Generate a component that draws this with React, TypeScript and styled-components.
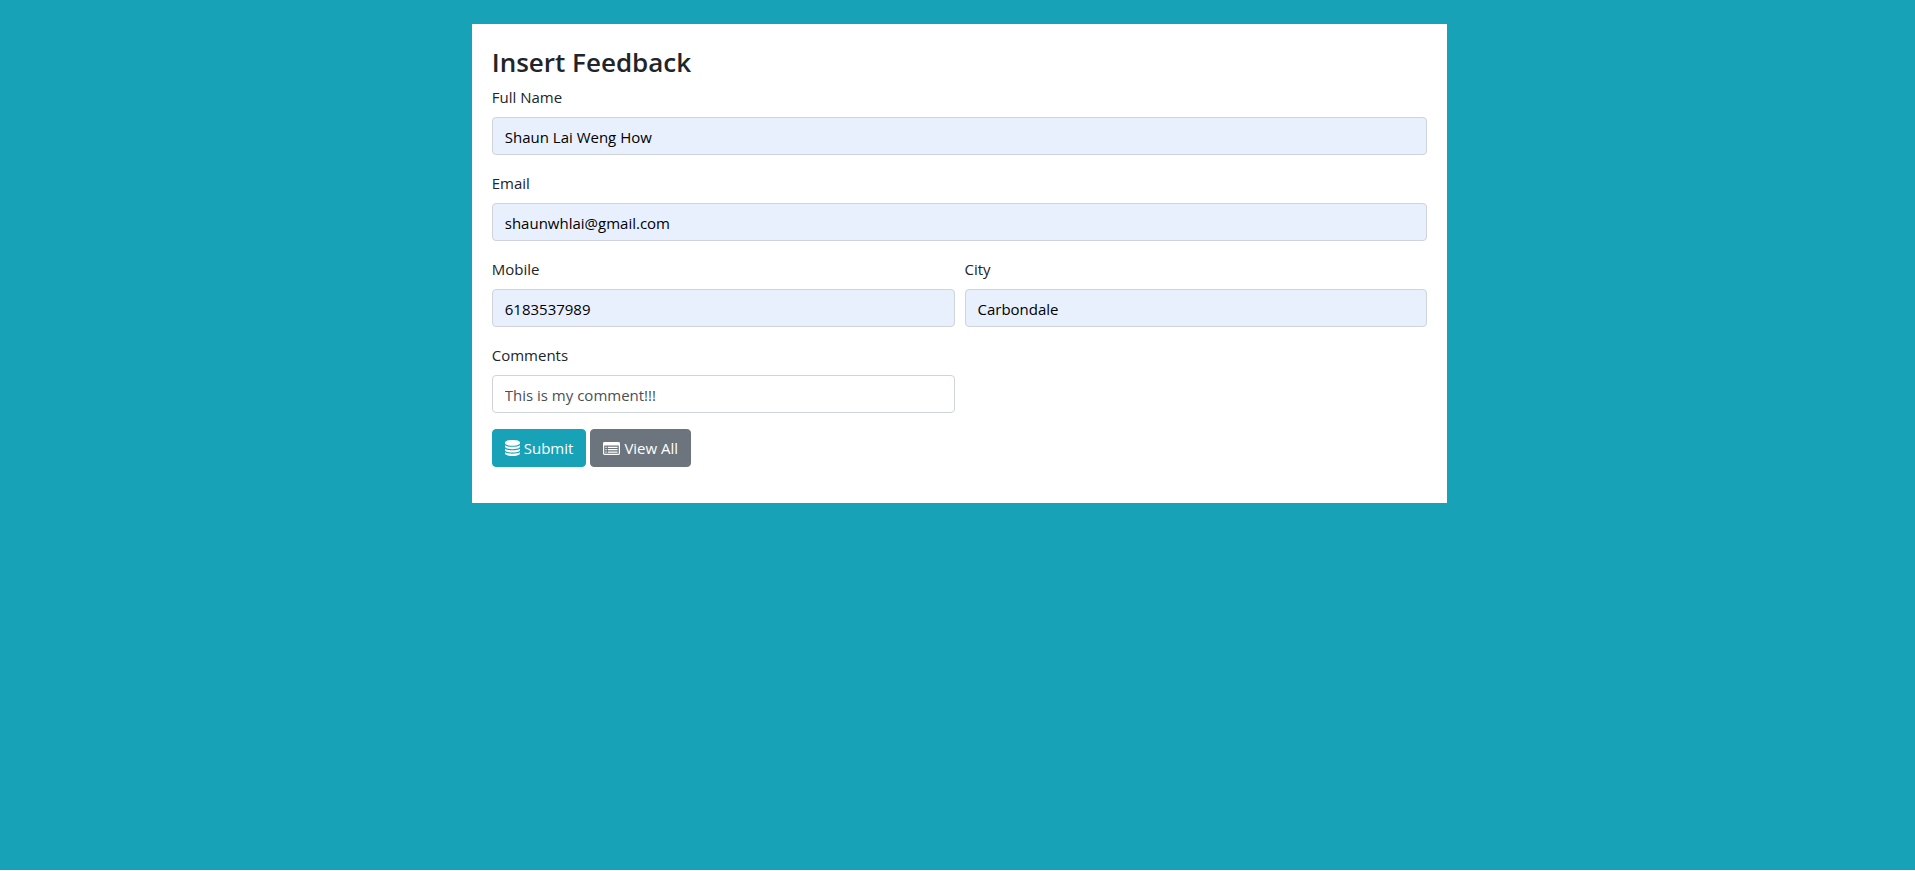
import React from "react";
import styled, { createGlobalStyle } from "styled-components";

const GlobalStyle = createGlobalStyle`
  *, *::before, *::after { box-sizing: border-box; }
  body {
    margin: 0;
    background: #fff;
    color: #212529;
    font-family: "Segoe UI", "Open Sans", "Noto Sans", sans-serif;
    font-size: 15px;
    line-height: 24px;
  }
`;

const Page = styled.main`
  display: flow-root;
  min-height: calc(100vh - 1px);
  background: #17a2b8;
`;

const Card = styled.section`
  width: calc(50% + 18px);
  margin: 24px 0 24px calc(25% - 7px);
  padding: 20px 20px 36px;
  background: #fff;
`;

const Title = styled.h3`
  margin: 0;
  padding: 2px 0 6px;
  font-size: 26px;
  font-weight: 600;
  line-height: 33px;
`;

const FieldGrid = styled.div`
  display: grid;
  grid-template-columns: 1fr 1fr;
  column-gap: 10px;
  row-gap: 16px;
  margin-bottom: 16px;
`;

const Field = styled.div<{ $wide?: boolean }>`
  display: flex;
  flex-direction: column;
  gap: 8px;
  min-width: 0;
  grid-column: ${({ $wide }) => ($wide ? "1 / -1" : "auto")};
`;

const Label = styled.label`
  align-self: flex-start;
`;

const TextInput = styled.input<{ $filled?: boolean }>`
  width: 100%;
  height: 38px;
  padding: 7px 12px 5px;
  border: 1px solid #ced4da;
  border-radius: 4px;
  background: ${({ $filled }) => ($filled ? "#e8f0fe" : "#fff")};
  color: ${({ $filled }) => ($filled ? "#000" : "#495057")};
  font: inherit;

  &:focus {
    outline: 0;
    border-color: #80bdff;
  }
`;

const Actions = styled.div`
  display: flex;
  gap: 4px;
`;

const Button = styled.button<{ $tone: string }>`
  display: inline-flex;
  align-items: center;
  gap: 4px;
  height: 38px;
  padding: 0 12px;
  border: 1px solid ${({ $tone }) => $tone};
  border-radius: 4px;
  background: ${({ $tone }) => $tone};
  color: #fff;
  font: inherit;
  cursor: pointer;
`;

const DatabaseIcon = () => (
  <svg width="15" height="16" viewBox="0 0 1536 1792" preserveAspectRatio="none" fill="currentColor" aria-hidden="true">
    <path d="M768 768q237 0 443-43t325-127v170q0 69-103 128t-280 93.500-385 34.500-385-34.500-280-93.500-103-128v-170q119 84 325 127t443 43zm0 768q237 0 443-43t325-127v170q0 69-103 128t-280 93.500-385 34.500-385-34.500-280-93.500-103-128v-170q119 84 325 127t443 43zm0-384q237 0 443-43t325-127v170q0 69-103 128t-280 93.500-385 34.500-385-34.500-280-93.500-103-128v-170q119 84 325 127t443 43zm0-1152q208 0 385 34.500t280 93.500 103 128v128q0 69-103 128t-280 93.500-385 34.500-385-34.500-280-93.500-103-128v-128q0-69 103-128t280-93.500 385-34.500z" />
  </svg>
);

const ListIcon = () => (
  <svg width="17" height="13" viewBox="0 0 28 22" preserveAspectRatio="none" fill="currentColor" aria-hidden="true">
    <path
      fillRule="evenodd"
      d="M2.500 0h23A2.500 2.500 0 0 1 28 2.500v17a2.500 2.500 0 0 1-2.500 2.500h-23A2.500 2.500 0 0 1 0 19.500v-17A2.500 2.500 0 0 1 2.500 0zM2 6.500v13a.5.5 0 0 0 .5.5h23a.5.5 0 0 0 .5-.5v-13a.5.5 0 0 0-.5-.5h-23a.5.5 0 0 0-.5.5z"
    />
    <path d="M4 8h2v2H4zM4 12h2v2H4zM4 16h2v2H4zM8 8h16v2H8zM8 12h16v2H8zM8 16h16v2H8z" />
  </svg>
);

const fields = [
  { id: "name", label: "Full Name", value: "Shaun Lai Weng How", type: "text", wide: true, filled: true },
  { id: "email", label: "Email", value: "shaunwhlai@gmail.com", type: "email", wide: true, filled: true },
  { id: "mobile", label: "Mobile", value: "6183537989", type: "tel", wide: false, filled: true },
  { id: "city", label: "City", value: "Carbondale", type: "text", wide: false, filled: true },
  { id: "comments", label: "Comments", value: "This is my comment!!!", type: "text", wide: false, filled: false },
];

export default function App() {
  return (
    <>
      <GlobalStyle />
      <Page>
        <Card>
          <Title>Insert Feedback</Title>
          <form onSubmit={(event) => event.preventDefault()}>
            <FieldGrid>
              {fields.map((field) => (
                <Field key={field.id} $wide={field.wide}>
                  <Label htmlFor={field.id}>{field.label}</Label>
                  <TextInput
                    id={field.id}
                    name={field.id}
                    type={field.type}
                    defaultValue={field.value}
                    $filled={field.filled}
                  />
                </Field>
              ))}
            </FieldGrid>
            <Actions>
              <Button type="submit" $tone="#17a2b8">
                <DatabaseIcon />
                Submit
              </Button>
              <Button type="button" $tone="#6c757d">
                <ListIcon />
                View All
              </Button>
            </Actions>
          </form>
        </Card>
      </Page>
    </>
  );
}
